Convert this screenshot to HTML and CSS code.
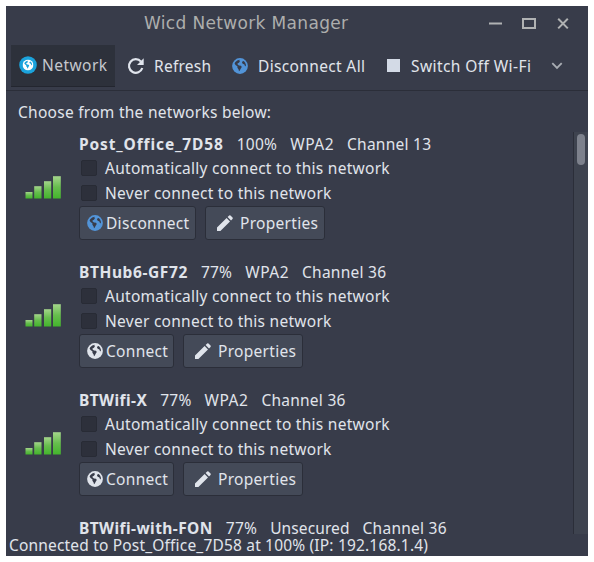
FILE: index.html
```html
<!DOCTYPE html>
<html lang="en">
<head>
	<meta charset="utf-8">
	<title>Wicd Network Manager</title>
	<link rel="stylesheet" href="styles.css">
</head>
<body>

<!-- shared icons -->
<svg class="defs" width="0" height="0">
	<defs>
		<linearGradient id="bar" x1="0" y1="0" x2="0" y2="1">
			<stop offset="0" stop-color="#a4d58b"/>
			<stop offset="0.5" stop-color="#66bd4d"/>
			<stop offset="1" stop-color="#43b52c"/>
		</linearGradient>
		<symbol id="globe" viewBox="0 0 16 16">
			<circle cx="8" cy="8" r="7.9" fill="currentColor"/>
			<path class="land" d="M3.2 4.2 5.2 2.4 7.8 1.8 7.3 3 8 3.6 6.6 4.9 5.6 5.2 5.6 6.5 7 7.4 9 7.8 9.8 9 8.8 10.4 7.8 12.6 7 13.2 6.6 11.4 5.4 9.7 5.4 8.3 3.8 7.2 2.6 5.8z"/>
			<path class="land" d="M10.3 3.6 11.8 3 13.2 4.7 14 7 13.6 8.6 12.7 7.6 12.2 6.2 11 5.9 10 4.8z"/>
		</symbol>
		<symbol id="pencil" viewBox="0 0 16 16">
			<path fill="currentColor" d="M0 12.6 9.6 3 13 6.4 3.4 16H0zM10.6 2 12.2.4Q12.8-.1 13.5.5L15.5 2.5Q16.1 3.2 15.5 3.9L14 5.4z"/>
		</symbol>
		<symbol id="signal" viewBox="0 0 36 23">
			<g fill="url(#bar)">
				<rect x="0.5" y="16" width="7" height="6.5"/>
				<rect x="9.2" y="10.2" width="7.3" height="12.3"/>
				<rect x="19" y="5.2" width="7.2" height="17.3"/>
				<rect x="28" y="0.2" width="7.8" height="22.3"/>
			</g>
		</symbol>
	</defs>
</svg>

<div class="window">
	<div class="titlebar">
		<span class="title">Wicd Network Manager</span>
		<svg class="controls" width="82" height="14" viewBox="0 0 82 14" fill="none" stroke="#b0b2b3">
			<path stroke-width="2" d="M0 7.5h13M34 3h12v9H34z"/>
			<path stroke-width="2" d="M69.2 2.8l9.6 9.6M78.8 2.8l-9.6 9.6"/>
		</svg>
	</div>

	<div class="toolbar">
		<div class="tool active">
			<svg class="net" width="18" height="18" viewBox="0 0 18 18"><circle cx="9" cy="9" r="8.8" fill="#1ba3dc"/><use href="#globe" x="3.5" y="3.5" width="11" height="11"/></svg>
			<span class="t-network">Network</span>
		</div>
		<div class="tool refresh">
			<svg width="16" height="16" viewBox="0 0 16 16" fill="none" stroke="#e0e4ec" stroke-width="2.2"><path d="M13 3.6A6.8 6.8 0 1 0 14.3 10"/><path d="M15.7.3V7H9z" fill="#e0e4ec" stroke="none"/></svg>
			<span class="t-refresh">Refresh</span>
		</div>
		<div class="tool disconnect-all">
			<svg class="blue" width="16" height="16"><use href="#globe"/></svg>
			<span class="t-all">Disconnect All</span>
		</div>
		<div class="tool wifi">
			<i class="stop"></i>
			<span class="t-wifi">Switch Off Wi-Fi</span>
		</div>
		<svg class="more" width="12" height="8" viewBox="0 0 12 8" fill="none" stroke="#a9adb3" stroke-width="1.8"><path d="M1.3 1.2 6 6l4.7-4.8"/></svg>
	</div>

	<p class="intro">Choose from the networks below:</p>

	<div class="main">
		<div class="list">
			<div class="network">
				<svg class="signal" width="36" height="23"><use href="#signal"/></svg>
				<div class="info">
					<div class="name"><b class="n1">Post_Office_7D58</b><span>100%</span><span class="wpa">WPA2</span><span>Channel 13</span></div>
					<div class="option auto"><i class="box"></i><span>Automatically connect to this network</span></div>
					<div class="option never"><i class="box"></i><span>Never connect to this network</span></div>
					<div class="buttons">
						<div class="button off"><svg class="blue" width="16" height="16"><use href="#globe"/></svg><span>Disconnect</span></div>
						<div class="button props"><svg width="16" height="16"><use href="#pencil"/></svg><span>Properties</span></div>
					</div>
				</div>
			</div>
			<div class="network">
				<svg class="signal" width="36" height="23"><use href="#signal"/></svg>
				<div class="info">
					<div class="name"><b class="n2">BTHub6-GF72</b><span>77%</span><span class="wpa">WPA2</span><span>Channel 36</span></div>
					<div class="option auto"><i class="box"></i><span>Automatically connect to this network</span></div>
					<div class="option never"><i class="box"></i><span>Never connect to this network</span></div>
					<div class="buttons">
						<div class="button on"><svg width="16" height="16"><use href="#globe"/></svg><span>Connect</span></div>
						<div class="button props"><svg width="16" height="16"><use href="#pencil"/></svg><span>Properties</span></div>
					</div>
				</div>
			</div>
			<div class="network">
				<svg class="signal" width="36" height="23"><use href="#signal"/></svg>
				<div class="info">
					<div class="name"><b class="n3">BTWifi-X</b><span>77%</span><span class="wpa">WPA2</span><span>Channel 36</span></div>
					<div class="option auto"><i class="box"></i><span>Automatically connect to this network</span></div>
					<div class="option never"><i class="box"></i><span>Never connect to this network</span></div>
					<div class="buttons">
						<div class="button on"><svg width="16" height="16"><use href="#globe"/></svg><span>Connect</span></div>
						<div class="button props"><svg width="16" height="16"><use href="#pencil"/></svg><span>Properties</span></div>
					</div>
				</div>
			</div>
			<div class="network">
				<div class="info last">
					<div class="name"><b class="n4">BTWifi-with-FON</b><span>77%</span><span class="open">Unsecured</span><span>Channel 36</span></div>
				</div>
			</div>
		</div>
		<div class="scrollbar"><div class="thumb"></div></div>
	</div>

	<div class="status">Connected to Post_Office_7D58 at 100% (IP: 192.168.1.4)</div>
</div>

</body>
</html>
```
FILE: styles.css
```css
* {
	box-sizing: border-box;
}
body {
	margin: 0;
	padding: 6px;
	background: #fff;
	font-family: "Noto Sans", sans-serif;
	font-size: 15.5px;
	letter-spacing: 0.25px;
	color: #e0e4eb;
	white-space: nowrap;
}
svg {
	display: block;
	flex: none;
	overflow: visible;
}
.defs {
	position: absolute;
}
.window {
	width: 582px;
	height: 550px;
	display: flex;
	flex-direction: column;
	background: #383c4a;
	overflow: hidden;
}

/* title bar */
.titlebar {
	height: 39px;
	display: flex;
	align-items: center;
	padding: 0 17px 6px 138px;
	justify-content: space-between;
}
.title {
	font-family: "DejaVu Sans", sans-serif;
	font-size: 17px;
	letter-spacing: 0.34px;
	color: #adaead;
}

/* toolbar */
.toolbar {
	height: 46px;
	display: flex;
	align-items: center;
	padding: 0 0 4px 5px;
	border-bottom: 1px solid #2b2e39;
}
.tool {
	height: 42px;
	display: flex;
	align-items: center;
	flex: none;
}
.active {
	width: 104px;
	padding-left: 8px;
	gap: 5px;
	background: #2d313b;
	border-bottom: 1px solid #23262f;
	color: #c5c8ce;
}
.refresh {
	width: 104px;
	padding-left: 13px;
	gap: 10px;
}
.disconnect-all {
	width: 154px;
	padding-left: 13px;
	gap: 10px;
}
.wifi {
	width: 165px;
	padding-left: 14px;
	gap: 11px;
}
.t-network {
	letter-spacing: 0.45px;
}
.t-all {
	letter-spacing: 0.35px;
}
.t-wifi {
	letter-spacing: 0.42px;
}
.stop {
	width: 13px;
	height: 13px;
	background: #d3dae6;
}
.more {
	margin-left: 13px;
}
.land {
	fill: var(--land, #383c4a);
}
.net {
	color: #fff;
	--land: #1ba3dc;
}
.blue {
	color: #5294d8;
}

.intro {
	margin: 0;
	height: 41px;
	line-height: 42px;
	padding-left: 12px;
	letter-spacing: 0.27px;
}

/* network list */
.main {
	height: 402px;
	display: flex;
}
.list {
	width: 567px;
	overflow: hidden;
}
.network {
	height: 128px;
	display: flex;
}
.signal {
	margin: 44px 18px 0 19px;
}
.info.last {
	margin-left: 73px;
}
.name {
	height: 24px;
	line-height: 25px;
	display: flex;
	gap: 13px;
}
.n1 {
	letter-spacing: 0.88px;
}
.n2 {
	letter-spacing: 0.6px;
}
.n3,
.n4 {
	letter-spacing: 0.42px;
}
.wpa {
	letter-spacing: 0.5px;
}
.open {
	letter-spacing: 0.1px;
}
.option {
	height: 25px;
	display: flex;
	align-items: center;
	gap: 8px;
	padding-left: 2px;
	letter-spacing: 0.27px;
}
.option.auto {
	height: 24px;
}
.box {
	width: 16px;
	height: 16px;
	background: #2d303b;
	border: 1px solid #282b35;
	border-radius: 2px;
}
.buttons {
	display: flex;
	gap: 9px;
	padding-top: 1px;
}
.button {
	height: 34px;
	display: flex;
	align-items: center;
	background: #444a58;
	border: 1px solid #2b2e39;
	border-radius: 3px;
	letter-spacing: 0.3px;
}
.button.off {
	width: 117px;
	padding-left: 7px;
	gap: 3px;
}
.button.on {
	width: 95px;
	padding-left: 7px;
	gap: 3px;
}
.button.props {
	width: 120px;
	padding-left: 11px;
	gap: 7px;
}

.scrollbar {
	width: 15px;
	background: #3e434f;
	border-left: 1px solid #2b2e39;
	padding: 2px 0 0 3px;
}
.thumb {
	width: 8px;
	height: 31px;
	border-radius: 4px;
	background: #7d818c;
}

.status {
	height: 22px;
	line-height: 22px;
	padding-left: 3px;
	letter-spacing: 0.18px;
}
```
